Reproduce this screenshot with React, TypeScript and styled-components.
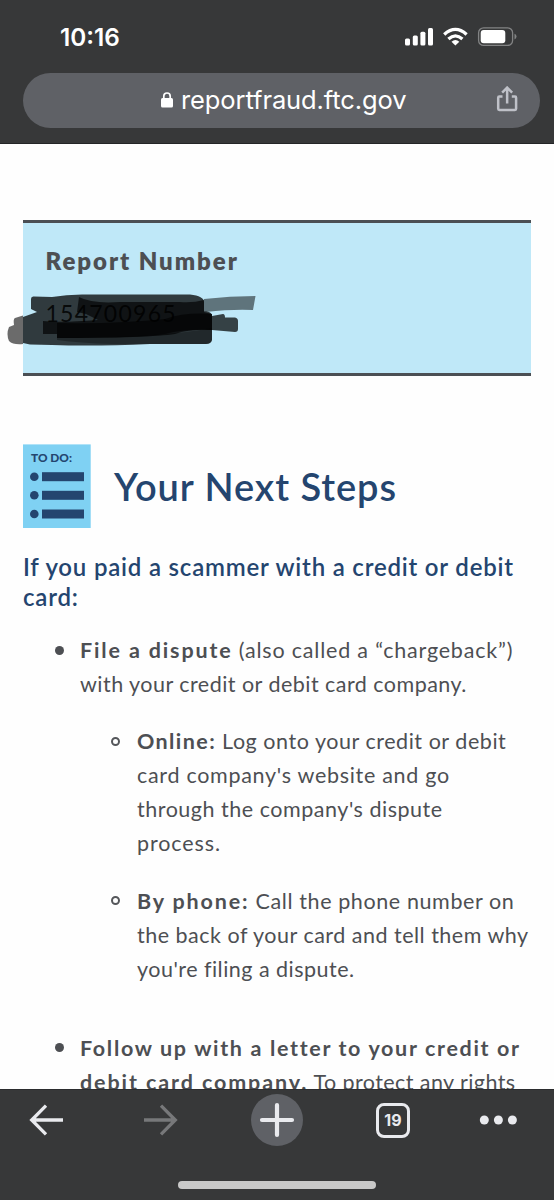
import React from "react";
import styled, { createGlobalStyle } from "styled-components";

const Global = createGlobalStyle`
  *, *::before { box-sizing: border-box; }
  html, body { margin: 0; padding: 0; background: #fff; }
`;

const Screen = styled.div`
  width: 554px;
  height: 1200px;
  overflow: hidden;
  display: flex;
  flex-direction: column;
  background: #fefefe;
  font-family: Lato, sans-serif;
  color: #4d4f53;
`;

const Header = styled.header`
  flex: none;
  height: 144px;
  background: #373839;
  border-bottom: 1px solid #242527;
  font-family: Inter, sans-serif;
`;

const StatusBar = styled.div`
  height: 73px;
  display: flex;
  justify-content: space-between;
  align-items: center;
  padding: 1px 37px 0 60px;
`;

const Clock = styled.span`
  color: #fff;
  font-size: 24.3px;
  font-weight: 600;
`;

const AddressBar = styled.div`
  height: 55px;
  margin: 0 14px 0 23px;
  padding: 0 20px 2px 138px;
  border-radius: 28px;
  background: #5f6166;
  display: flex;
  align-items: center;
`;

const Url = styled.span`
  flex: 1;
  margin-left: 8px;
  color: #fff;
  font-size: 25.5px;
  letter-spacing: -0.1px;
  white-space: nowrap;
`;

const Page = styled.main`
  flex: 1;
  min-height: 0;
  overflow: hidden;
  padding: 76px 23px 0;
`;

const ReportCard = styled.section`
  position: relative;
  height: 156px;
  padding: 21px 22.5px 0;
  background: #bfe8f8;
  border-top: 3px solid #4b4f54;
  border-bottom: 3px solid #4b4f54;
`;

const ReportLabel = styled.h2`
  margin: 0;
  font-size: 24px;
  line-height: 34px;
  font-weight: 800;
  letter-spacing: 1.95px;
`;

const ReportNumber = styled.p`
  margin: 18px 0 0;
  font-size: 23px;
  line-height: 34px;
  letter-spacing: 1.25px;
  color: #22282b;
`;

const Scribble = styled.svg`
  position: absolute;
  left: -23px;
  top: 62px;
`;

const StepsHeader = styled.div`
  display: flex;
  align-items: center;
  gap: 23px;
  margin-top: 68px;
`;

const StepsTitle = styled.h1`
  margin: 0;
  color: #24456f;
  font-size: 38px;
  line-height: 48px;
  font-weight: 600;
  letter-spacing: 0.95px;
`;

const Subheading = styled.h3`
  margin: 24px 0 0;
  color: #24456f;
  font-size: 24px;
  line-height: 30px;
  font-weight: 600;
`;

const Line = styled.span<{ $track?: number }>`
  display: block;
  white-space: nowrap;
  letter-spacing: ${(p) => p.$track ?? 0.6}px;
`;

const Strong = styled.strong<{ $track?: number }>`
  font-weight: 700;
  letter-spacing: ${(p) => p.$track ?? 1.85}px;
`;

const StepList = styled.ul`
  list-style: none;
  margin: 21px 0 0;
  padding: 0 0 0 57px;
  font-size: 21.5px;
  line-height: 34.1px;
`;

const SubList = styled(StepList)`
  margin: 0;
`;

const Step = styled.li<{ $gap?: number; $hollow?: boolean }>`
  position: relative;
  margin-top: ${(p) => p.$gap ?? 0}px;

  &::before {
    content: "";
    position: absolute;
    left: ${(p) => (p.$hollow ? -26 : -25.5)}px;
    top: 12.6px;
    width: 9px;
    height: 9px;
    border-radius: 50%;
    border: ${(p) => (p.$hollow ? "2px solid #55575b" : "none")};
    background: ${(p) => (p.$hollow ? "transparent" : "#4d4f53")};
  }
`;

const Toolbar = styled.footer`
  flex: none;
  height: 111px;
  background: #373839;
  border-top: 1px solid #2b2c2e;
  display: flex;
  flex-direction: column;
  align-items: center;
  font-family: Inter, sans-serif;
`;

const ToolRow = styled.div`
  width: 100%;
  height: 60px;
  padding-left: 28px;
  display: grid;
  grid-template-columns: 115px 108px 125px 103px auto;
  align-items: center;
  justify-items: start;
`;

const NewTab = styled.div`
  width: 52px;
  height: 52px;
  border-radius: 50%;
  background: #5f6166;
  display: flex;
  align-items: center;
  justify-content: center;
`;

const TabCount = styled.div`
  width: 34px;
  height: 35px;
  border: 3px solid #e9eaee;
  border-radius: 8px;
  color: #e9eaee;
  font-size: 16px;
  font-weight: 700;
  display: flex;
  align-items: center;
  justify-content: center;
`;

const HomeIndicator = styled.div`
  width: 198px;
  height: 8px;
  margin-top: 31px;
  border-radius: 4px;
  background: #c9c9c9;
`;

const StatusIcons = () => (
  <svg width="112" height="22" viewBox="405 26 112 22">
    <g fill="#fff">
      <rect x="405" y="38.5" width="5" height="7" rx="1.5" />
      <rect x="412.8" y="35.5" width="5" height="10" rx="1.5" />
      <rect x="420.4" y="31.8" width="5" height="13.7" rx="1.5" />
      <rect x="428" y="28" width="5" height="17.5" rx="1.5" />
    </g>
    <g fill="none" stroke="#fff" strokeWidth="3.3">
      <path d="M444.2 34.4 Q455.4 24.4 466.6 34.4" />
      <path d="M448.4 39 Q455.4 32.8 462.4 39" />
    </g>
    <path d="M451.5 41.7 Q455.4 38.4 459.3 41.7 L455.4 45.6 Z" fill="#fff" />
    <rect x="478.6" y="27.8" width="34" height="17.6" rx="5" fill="none" stroke="#828384" strokeWidth="1.3" />
    <rect x="480.7" y="30" width="24.6" height="13.2" rx="3" fill="#fff" />
    <path d="M514.5 33.8 Q516.5 34.6 516.5 36.6 Q516.5 38.6 514.5 39.4 Z" fill="#828384" />
  </svg>
);

const LockIcon = () => (
  <svg width="12" height="16" viewBox="0 0 12 16">
    <rect x="0" y="6" width="12" height="9.4" rx="1.5" fill="#fff" />
    <path d="M2.8 7 V4.2 A3.2 3.2 0 0 1 9.2 4.2 V7" fill="none" stroke="#fff" strokeWidth="1.7" />
  </svg>
);

const ShareIcon = () => (
  <svg width="24" height="28" viewBox="0 0 24 28" fill="none" stroke="#bfc1c8" strokeWidth="2.5">
    <path d="M6.5 10.6 H3.3 Q2.2 10.6 2.2 11.7 V22.8 Q2.2 24 3.3 24 H19 Q20.1 24 20.1 22.8 V11.7 Q20.1 10.6 19 10.6 H15.8" />
    <path d="M11.15 17.5 V2 M6.15 6.6 L11.15 1.6 L16.15 6.6" />
  </svg>
);

const TodoIcon = () => (
  <svg width="68" height="84" viewBox="0 0 68 84">
    <rect y="0.4" width="67.7" height="83.6" fill="#7fd1f3" />
    <text x="8" y="18" textLength="41" lengthAdjust="spacingAndGlyphs" fill="#24456f" fontFamily="Lato, sans-serif" fontSize="11" fontWeight="900">
      TO DO:
    </text>
    {[32.7, 51.3, 70].map((y) => (
      <g key={y} fill="#24456f">
        <circle cx="11.3" cy={y} r="4.3" />
        <rect x="19" y={y - 4.5} width="42" height="9" />
      </g>
    ))}
  </svg>
);

const ScribbleMark = () => (
  <Scribble width="270" height="70" viewBox="0 285 270 70" fill="#000">
    <path fillOpacity="0.75" d="M31 299 Q31 296 34 296.5 L52 297 Q66 294.5 82 294.5 L190 294.5 Q204 296 204 302 V311 L209 312 Q212 313 212 317 V340 Q211 344 206 344 L150 344 Q95 346.5 52 345 L30 344.5 L23 343 V317 L37 312 L31 309 Z" />
    <path fillOpacity="0.5" d="M204 299 Q230 296 255.5 296 L253 310 Q232 309 206 312 L204 311 Z" />
    <path fillOpacity="0.58" d="M23 315.5 L15 318 Q13 319 14 325 L9 327 Q6 334 9 341 Q13 345 23 344 Z" />
    <path fillOpacity="0.72" d="M212 316 L223 314 Q225 314 225 317.5 L235 317.5 Q238 318 238 321 V329 Q238 332 235 332 L212 330 Z" />
    <path fillOpacity="0.66" d="M79 297 Q92 304 120 302 L180 302 Q193 303 204 300 V312 L212 314 V330 Q190 329 175 334 Q150 338 57 338 V334 L43 334 V321 Q60 323 98 320 L86 314 L77 312 Z" />
    <path fillOpacity="0.6" d="M57 323 Q120 324 165 319 Q185 312 212 314 V330 Q185 329 165 334 Q140 338 57 338 Z" />
    <path fillOpacity="0.3" d="M57 338 Q160 338 212 328 V340 Q211 344 206 344 L112 344 Q80 343 57 340 Z" />
  </Scribble>
);

const ArrowIcon = ({ color, flip }: { color: string; flip?: boolean }) => (
  <svg width="36" height="34" viewBox="0 0 36 34" fill="none" stroke={color} strokeWidth="3.3">
    <path
      transform={flip ? "translate(36 0) scale(-1 1)" : undefined}
      d="M35 17 H3.5 M18 2.7 L3.7 17 L18 31.3"
    />
  </svg>
);

const PlusIcon = () => (
  <svg width="36" height="36" viewBox="0 0 36 36" stroke="#e9eaee" strokeWidth="4.2" strokeLinecap="round">
    <path d="M18 3 V33 M3 18 H33" />
  </svg>
);

const MoreIcon = () => (
  <svg width="38" height="10" viewBox="0 0 38 10" fill="#e9eaee">
    <circle cx="5.3" cy="5" r="4.5" />
    <circle cx="19.4" cy="5" r="4.5" />
    <circle cx="33.4" cy="5" r="4.5" />
  </svg>
);

export default function App() {
  return (
    <Screen>
      <Global />
      <Header>
        <StatusBar>
          <Clock>10:16</Clock>
          <StatusIcons />
        </StatusBar>
        <AddressBar>
          <LockIcon />
          <Url>reportfraud.ftc.gov</Url>
          <ShareIcon />
        </AddressBar>
      </Header>
      <Page>
        <ReportCard>
          <ReportLabel>Report Number</ReportLabel>
          <ReportNumber>154700965</ReportNumber>
          <ScribbleMark />
        </ReportCard>
        <StepsHeader>
          <TodoIcon />
          <StepsTitle>Your Next Steps</StepsTitle>
        </StepsHeader>
        <Subheading>
          <Line $track={0.8}>If you paid a scammer with a credit or debit</Line>
          <Line $track={0.8}>card:</Line>
        </Subheading>
        <StepList>
          <Step>
            <Line $track={0.8}><Strong>File a dispute</Strong> (also called a “chargeback”)</Line>
            <Line $track={0.47}>with your credit or debit card company.</Line>
            <SubList>
              <Step $hollow $gap={23}>
                <Line $track={0.54}><Strong $track={1.4}>Online:</Strong> Log onto your credit or debit</Line>
                <Line $track={0.7}>card company's website and go</Line>
                <Line $track={0.52}>through the company's dispute</Line>
                <Line $track={0.9}>process.</Line>
              </Step>
              <Step $hollow $gap={23}>
                <Line><Strong>By phone:</Strong> Call the phone number on</Line>
                <Line $track={0.5}>the back of your card and tell them why</Line>
                <Line $track={0.48}>you're filing a dispute.</Line>
              </Step>
            </SubList>
          </Step>
          <Step $gap={45}>
            <Line><Strong $track={1.66}>Follow up with a letter to your credit or</Strong></Line>
            <Line $track={0.42}><Strong $track={1.9}>debit card company.</Strong> To protect any rights</Line>
          </Step>
        </StepList>
      </Page>
      <Toolbar>
        <ToolRow>
          <ArrowIcon color="#e9eaee" />
          <ArrowIcon color="#77787a" flip />
          <NewTab><PlusIcon /></NewTab>
          <TabCount>19</TabCount>
          <MoreIcon />
        </ToolRow>
        <HomeIndicator />
      </Toolbar>
    </Screen>
  );
}
